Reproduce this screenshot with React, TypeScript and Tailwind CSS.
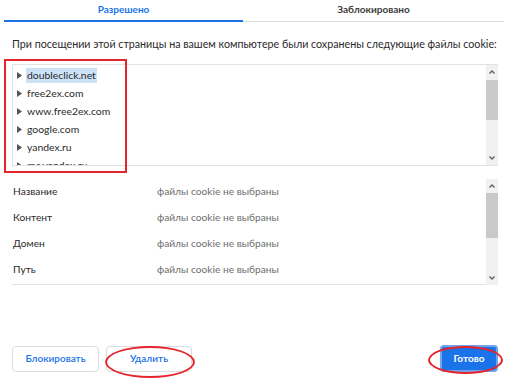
import React from 'react'

const cookies = ['doubleclick.net', 'free2ex.com', 'www.free2ex.com', 'google.com', 'yandex.ru', 'mc.yandex.ru']

const details = ['Название', 'Контент', 'Домен', 'Путь']

const Scrollbar = ({ thumbTop, thumbHeight }: { thumbTop: string; thumbHeight: string }) => (
  <div className="w-[12px] h-full bg-[#f1f1f1] flex flex-col items-center">
    <svg width="12" height="14" viewBox="0 0 12 14" className="shrink-0">
      <path d="M3.5 8.5 L6 6 L8.5 8.5" stroke="#606060" strokeWidth="1.4" fill="none" />
    </svg>
    <div className={`w-[12px] bg-[#c9c9c9] ${thumbTop} ${thumbHeight}`} />
    <div className="flex-1" />
    <svg width="12" height="14" viewBox="0 0 12 14" className="shrink-0">
      <path d="M3.5 5.5 L6 8 L8.5 5.5" stroke="#606060" strokeWidth="1.4" fill="none" />
    </svg>
  </div>
)

export default function App() {
  return (
    <div className="relative w-[524px] h-[380px] bg-white overflow-hidden font-['Lato',sans-serif] text-[#2a2a2a]">
      {/* tabs */}
      <div className="flex ml-[4px] w-[500px] h-[22px] text-[10px] font-bold">
        <div className="w-[239px] flex items-start justify-center pt-[2px] text-[#1a73e8] border-b-2 border-[#1a73e8]">
          Разрешено
        </div>
        <div className="flex-1 flex items-start justify-center pt-[2px] text-[#3c3c3c] border-b border-[#dcdcdc] h-[22px]">
          Заблокировано
        </div>
      </div>

      <p className="mt-[14px] ml-[12px] text-[10.7px] leading-[16px] whitespace-nowrap">
        При посещении этой страницы на вашем компьютере были сохранены следующие файлы cookie:
      </p>

      {/* cookie list */}
      <div className="mt-[12px] ml-[12px] w-[486px] h-[102px] border-t border-l border-b border-[#e2e2e2] flex">
        <div className="flex-1 overflow-hidden pt-[1px] pl-[4px] text-[10.4px]">
          {cookies.map((c, i) => (
            <div key={c} className="h-[18px] flex items-center">
              <svg width="6" height="7" viewBox="0 0 6 7" className="mr-[3px] shrink-0">
                <path d="M0 0 L5 3.5 L0 7 Z" fill="#555" />
              </svg>
              <span className={i === 0 ? 'bg-[#cce2f7] px-[1px] leading-[15px]' : 'px-[1px] leading-[15px]'}>{c}</span>
            </div>
          ))}
        </div>
        <Scrollbar thumbTop="mt-[1px]" thumbHeight="h-[40px]" />
      </div>

      {/* details */}
      <div className="mt-[13px] ml-[12px] w-[486px] h-[106px] flex">
        <div className="flex-1 border-b border-[#e2e2e2] text-[10.2px]">
          {details.map((d) => (
            <div key={d} className="h-[26px] flex items-center pl-[1px]">
              <span className="w-[144px]">{d}</span>
              <span className="text-[#6e6e6e]">файлы cookie не выбраны</span>
            </div>
          ))}
        </div>
        <Scrollbar thumbTop="mt-0" thumbHeight="h-[45px]" />
      </div>

      {/* buttons */}
      <div className="mt-[60px] ml-[12px] w-[486px] flex items-center text-[10px]">
        <button className="w-[87px] h-[26px] rounded-[4px] border border-[#dadce0] text-[#1a73e8] font-semibold">
          Блокировать
        </button>
        <button className="ml-[7px] w-[86px] h-[26px] rounded-[4px] border border-[#dadce0] text-[#1a73e8] font-semibold">
          Удалить
        </button>
        <div className="flex-1" />
        <button className="w-[58px] h-[27px] rounded-[4px] bg-[#1a73e8] border-2 border-[#6ea4f0] text-white font-bold">
          Готово
        </button>
      </div>

      {/* red annotations */}
      <div className="absolute left-[4px] top-[59px] w-[123px] h-[114px] border-2 border-[#e5252c]" />
      <div className="absolute left-[105px] top-[346px] w-[90px] h-[32px] rounded-[50%] border-2 border-[#e5252c]" />
      <div className="absolute left-[428px] top-[346px] w-[75px] h-[28px] rounded-[50%] border-2 border-[#e5252c]" />
    </div>
  )
}
